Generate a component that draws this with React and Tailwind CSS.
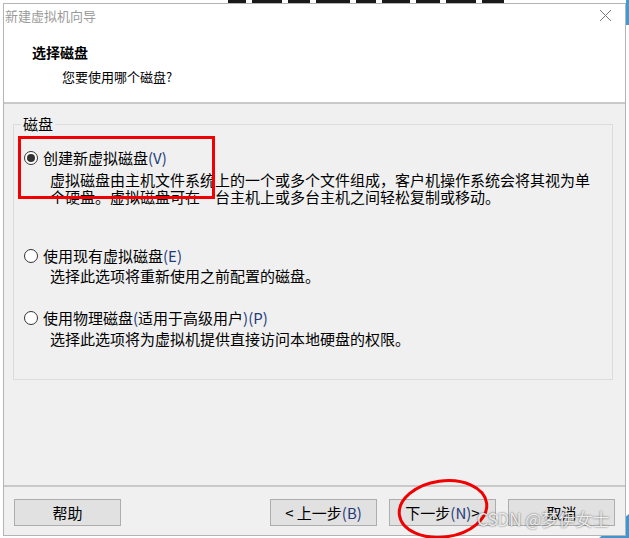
export default function App() {
  const Radio = ({ checked }) => (
    <span className="w-[14px] h-[14px] rounded-full border border-[#333333] bg-white flex items-center justify-center shrink-0">
      {checked && <span className="w-[8px] h-[8px] rounded-full bg-[#333333]" />}
    </span>
  );
  const Acc = ({ children }) => <span className="text-[#1f3c78]">{children}</span>;

  const Btn = ({ children }) => (
    <div className="w-[107px] h-[27px] border border-[#adadad] bg-[#e1e1e1] flex items-center justify-center text-[15px] leading-none">
      {children}
    </div>
  );

  return (
    <div className="relative w-[629px] h-[538px] overflow-hidden bg-white font-['Noto_Sans_CJK_SC','Microsoft_YaHei',sans-serif] text-black">
      {/* desktop background bits */}
      <div className="absolute top-0 left-[228px] flex gap-[6px]">
        <div className="w-[18px] h-[3px] bg-[#1a1a1a]" />
        <div className="w-[30px] h-[3px] bg-[#1a1a1a]" />
        <div className="w-[22px] h-[3px] bg-[#1a1a1a]" />
        <div className="w-[34px] h-[3px] bg-[#1a1a1a]" />
        <div className="w-[20px] h-[3px] bg-[#1a1a1a]" />
        <div className="w-[28px] h-[3px] bg-[#1a1a1a]" />
        <div className="w-[24px] h-[3px] bg-[#1a1a1a]" />
        <div className="w-[30px] h-[3px] bg-[#1a1a1a]" />
        <div className="w-[22px] h-[3px] bg-[#1a1a1a]" />
      </div>
      <div className="absolute right-0 top-0 w-[3px] h-[25px] bg-[#3f9bd4]" />
      <svg className="absolute right-0 bottom-0" width="30" height="30" viewBox="0 0 30 30">
        <polygon points="0,30 30,30 30,6" fill="#3a97d4" />
      </svg>

      {/* window */}
      <div className="absolute left-[3px] top-[3px] w-[623px] h-[533px] flex flex-col border border-[#b4b4b4] bg-[#f0f0f0]">
        {/* header */}
        <div className="h-[98px] bg-white flex flex-col">
          <div className="h-[23px] flex items-center justify-between pl-[1px] pr-[13px]">
            <span className="text-[13px] leading-none text-[#9b9b9b]">新建虚拟机向导</span>
            <svg width="13" height="13" viewBox="0 0 13 13">
              <path d="M1 1 L12 12 M12 1 L1 12" stroke="#7a7a7a" strokeWidth="1" fill="none" />
            </svg>
          </div>
          <div className="mt-[15px] pl-[28px] text-[14px] font-bold leading-[20px]">选择磁盘</div>
          <div className="mt-[5px] pl-[58px] text-[13px] leading-[20px]">您要使用哪个磁盘?</div>
        </div>
        <div className="h-[2px] bg-[#c9c9c9]" />

        {/* body */}
        <div className="flex-1 pt-[20px] pl-[9px]">
          <div className="relative w-[600px] h-[256px] border border-[#dcdcdc] pl-[10px] pt-[23px]">
            <span className="absolute left-[7px] top-[-11px] px-[2px] bg-[#f0f0f0] text-[15px] leading-[20px]">磁盘</span>

            <div className="flex items-center gap-[5px] h-[20px] text-[15px] leading-[20px]">
              <Radio checked />
              <span>创建新虚拟磁盘<Acc>(V)</Acc></span>
            </div>
            <div className="mt-[3px] pl-[26px] text-[15px] leading-[17px]">
              <div>虚拟磁盘由主机文件系统上的一个或多个文件组成，客户机操作系统会将其视为单</div>
              <div>个硬盘。虚拟磁盘可在一台主机上或多台主机之间轻松复制或移动。</div>
            </div>

            <div className="mt-[41px] flex items-center gap-[5px] h-[20px] text-[15px] leading-[20px]">
              <Radio />
              <span>使用现有虚拟磁盘<Acc>(E)</Acc></span>
            </div>
            <div className="mt-[1px] pl-[26px] text-[15px] leading-[17px]">选择此选项将重新使用之前配置的磁盘。</div>

            <div className="mt-[24px] flex items-center gap-[5px] h-[20px] text-[15px] leading-[20px]">
              <Radio />
              <span>使用物理磁盘<Acc>(</Acc>适用于高级用户<Acc>)(P)</Acc></span>
            </div>
            <div className="mt-[2px] pl-[26px] text-[15px] leading-[17px]">选择此选项将为虚拟机提供直接访问本地硬盘的权限。</div>
          </div>
        </div>

        <div className="h-[2px] bg-[#c9c9c9]" />
        {/* footer */}
        <div className="h-[48px] px-[10px] pt-[12px] flex items-start justify-between">
          <Btn>帮助</Btn>
          <div className="flex gap-[12px]">
            <Btn>&lt; 上一步<Acc>(B)</Acc></Btn>
            <Btn>下一步<Acc>(N)</Acc> &gt;</Btn>
            <Btn>取消</Btn>
          </div>
        </div>
      </div>

      {/* annotations */}
      <div className="absolute left-[18px] top-[136px] w-[197px] h-[63px] border-[3px] border-[#f00000]" />
      <svg className="absolute left-[393px] top-[475px]" width="100" height="66" viewBox="0 0 100 66">
        <ellipse cx="50" cy="34" rx="44" ry="28" transform="rotate(-8 50 34)" stroke="#f00000" strokeWidth="3" fill="none" />
      </svg>
      <div className="absolute left-[477px] top-[508px] text-[17px] leading-[22px] text-white/85 [text-shadow:0_0_2px_rgba(0,0,0,0.7)] font-['Noto_Sans_CJK_SC',sans-serif]">
        CSDN @梦伊女士
      </div>
    </div>
  );
}
